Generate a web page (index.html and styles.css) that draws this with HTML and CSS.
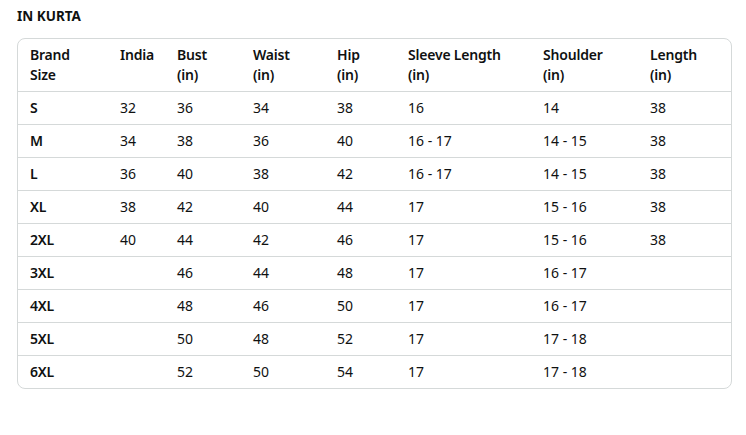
FILE: index.html
```html
<!DOCTYPE html>
<html>
<head>
<meta charset="utf-8">
<link rel="stylesheet" href="styles.css">
</head>
<body>
<div class="wrap">
  <h2 class="title">IN KURTA</h2>
  <div class="box">
    <table class="chart">
      <colgroup>
        <col style="width:90px"><col style="width:57px"><col style="width:76px"><col style="width:84px"><col style="width:71px"><col style="width:135px"><col style="width:107px"><col>
      </colgroup>
      <thead>
        <tr><th>Brand<br>Size</th><th>India</th><th>Bust<br>(in)</th><th>Waist<br>(in)</th><th>Hip<br>(in)</th><th>Sleeve Length<br>(in)</th><th>Shoulder<br>(in)</th><th>Length<br>(in)</th></tr>
      </thead>
      <tbody>
        <tr><th>S</th><td>32</td><td>36</td><td>34</td><td>38</td><td>16</td><td>14</td><td>38</td></tr>
        <tr><th>M</th><td>34</td><td>38</td><td>36</td><td>40</td><td>16 - 17</td><td>14 - 15</td><td>38</td></tr>
        <tr><th>L</th><td>36</td><td>40</td><td>38</td><td>42</td><td>16 - 17</td><td>14 - 15</td><td>38</td></tr>
        <tr><th>XL</th><td>38</td><td>42</td><td>40</td><td>44</td><td>17</td><td>15 - 16</td><td>38</td></tr>
        <tr><th>2XL</th><td>40</td><td>44</td><td>42</td><td>46</td><td>17</td><td>15 - 16</td><td>38</td></tr>
        <tr><th>3XL</th><td></td><td>46</td><td>44</td><td>48</td><td>17</td><td>16 - 17</td><td></td></tr>
        <tr><th>4XL</th><td></td><td>48</td><td>46</td><td>50</td><td>17</td><td>16 - 17</td><td></td></tr>
        <tr><th>5XL</th><td></td><td>50</td><td>48</td><td>52</td><td>17</td><td>17 - 18</td><td></td></tr>
        <tr><th>6XL</th><td></td><td>52</td><td>50</td><td>54</td><td>17</td><td>17 - 18</td><td></td></tr>
      </tbody>
    </table>
  </div>
</div>
</body>
</html>
```
FILE: styles.css
```css
html, body {
  margin: 0;
  padding: 0;
  background: #ffffff;
}
body {
  font-family: "Noto Sans", "Open Sans", sans-serif;
  color: #0f1111;
}
.wrap {
  padding: 7px 14px 0 17px;
}
.title {
  margin: 0 0 13px 0;
  font-size: 13.5px;
  line-height: 18px;
  font-weight: 700;
}
.box {
  border: 1px solid #d5d9d9;
  border-radius: 8px;
  overflow: hidden;
}
.chart {
  width: 100%;
  border-collapse: collapse;
  table-layout: fixed;
  font-size: 14px;
  line-height: 20px;
}
.chart th, .chart td {
  text-align: left;
  vertical-align: top;
  padding: 6px 12px;
  white-space: nowrap;
}
.chart th {
  font-weight: 600;
  letter-spacing: -0.2px;
}
.chart td {
  font-weight: 400;
}
.chart tbody tr th, .chart tbody tr td {
  border-top: 1px solid #d5d9d9;
}
```
